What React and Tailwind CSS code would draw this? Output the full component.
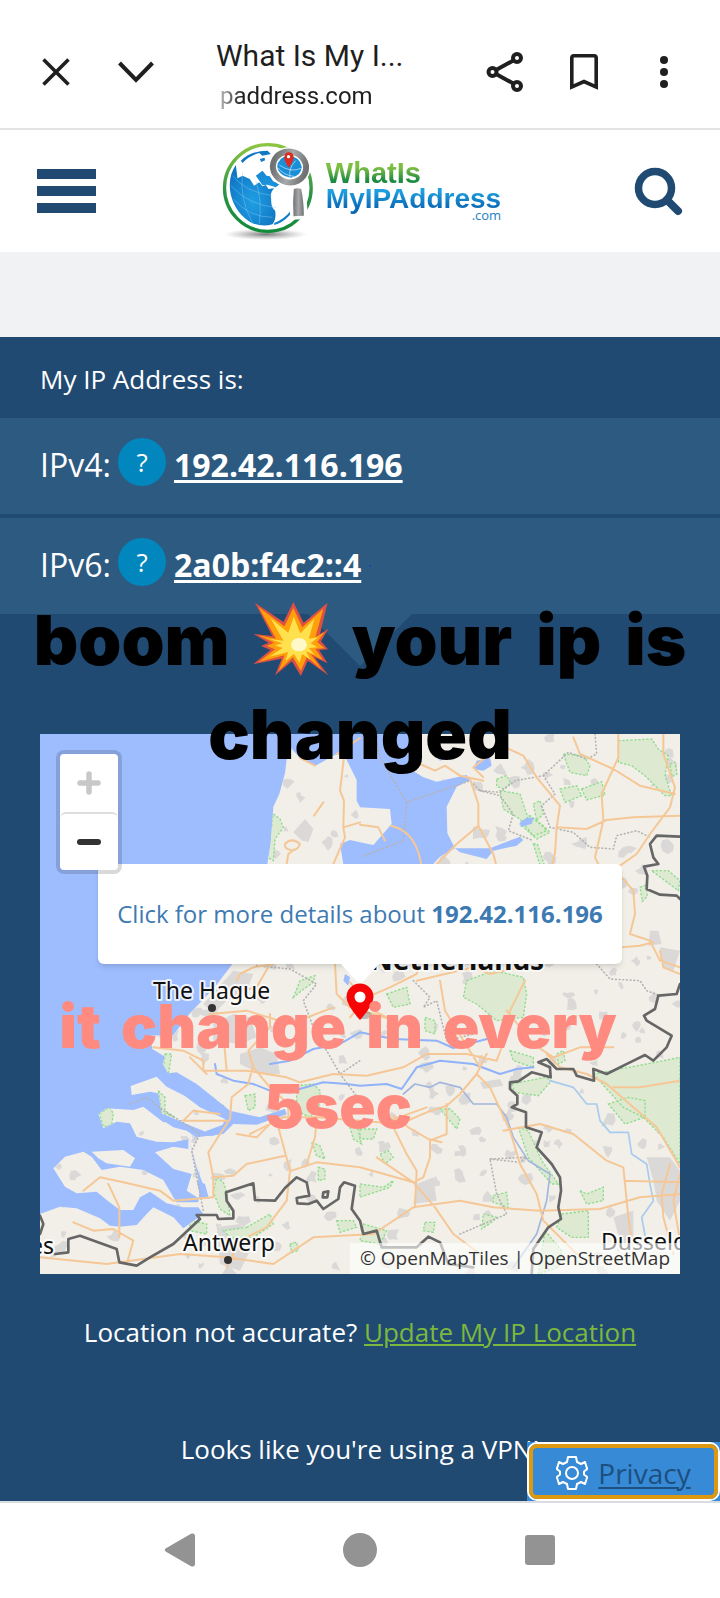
import React from "react";

const ROADS = [
  // north-west
  "M912 70L900 170L912 200L910 280L915 310L880 390M910 280L960 265M850 205L822 245M740 390L745 360L765 345",
  "M735 330q20-22 45 0q-8 22-28 18q-20-4-17-18M780 72L825 95M890 60L960 12",
  // north-east
  "M1125 60L1140 90L1185 110L1215 95L1260 125L1330 140M1400 42L1450 65L1490 130L1560 215L1550 280L1545 355L1535 400",
  "M1290 135L1315 210L1315 275L1360 360L1370 400M1315 275L1250 330L1180 400M1330 130L1300 100L1400 20",
  "M1735 0L1735 70L1685 180L1690 260L1665 370L1680 400M1600 10L1620 60L1720 105L1800 155L1905 180M1870 0L1870 60L1905 160L1890 220L1830 300L1790 360L1740 395",
  "M1550 280L1640 285L1700 258L1780 250L1920 245M1052 275Q1130 290 1145 400M960 272L1015 280L1035 320",
  "M1745 430L1780 470L1785 540L1770 600L1830 620L1860 680L1920 700M1745 640L1800 635L1840 625M1860 650L1870 700L1920 720",
  // centre
  "M590 740L600 720L640 700L700 690M690 690L650 760L600 770M885 690L890 780L930 820L1000 840L1130 880M1140 690L1130 720L1050 760L980 790L930 850",
  "M1130 740L1300 700L1350 720L1480 690M1200 740L1215 830L1320 1000M1455 740L1410 830L1400 900L1370 980M1400 830L1480 930L1540 970L1620 940L1720 940",
  "M930 745L1000 830L1060 860M510 840L620 830L750 870L880 820M690 840L690 880L625 950L640 1000L690 1060L745 1110L745 1180",
  "M340 940L430 950L490 980L490 1010L620 1010L740 1030L780 1045L880 1020L980 1025L1090 1000L1160 960L1280 960L1370 980",
  "M550 900L560 1010M450 970L500 1020M640 990L625 1050L575 1090L570 1155L540 1200L505 1255L520 1330L520 1390L400 1400L360 1370L250 1345L180 1330L130 1370",
  "M430 1160L560 1160M630 1200L730 1150L850 1150M715 1180L750 1310L740 1400L680 1480L600 1520L560 1600M520 1330L580 1325L620 1290L735 1265M590 1200L650 1210L700 1160",
  "M800 1290L825 1210L830 1150L960 1160L1080 1170L1160 1135L1220 1115L1260 1080L1310 1020L1340 960M1160 1120L1050 1160L1100 1260L1130 1310L1125 1420",
  "M755 1310L830 1285L960 1300L1120 1345L1150 1330L1170 1270L1170 1220L1220 1200L1220 1110M1060 1145L1105 1180L1165 1215L1205 1225",
  "M1310 1020L1350 1060L1410 1190L1440 1290L1490 1380L1510 1460L1610 1560M1390 1190L1500 1170L1600 1200L1700 1280L1750 1300L1765 1450L1780 1560M1000 1500L1120 1420L1260 1400L1360 1420L1500 1430L1680 1425L1800 1390L1920 1380",
  "M1010 1270L1120 1345L1185 1420L1240 1500L1320 1560M1520 960L1560 1000L1640 1020L1700 1050L1780 1120L1850 1180L1920 1300M1755 1340L1920 1345M1720 1060L1800 1060L1920 1040",
  "M1890 1290L1865 1380L1870 1450L1900 1560M1920 1320L1900 1400L1920 1520M100 1465L160 1490L220 1485L280 1520L260 1590M0 1570L200 1590L420 1560L560 1570L700 1590L820 1510L1000 1500M205 1350L238 1420L238 1510M430 1160L460 1130L540 1140",
];

const GREENS = [
  "M700 240l20 15l10 25l-25 35l-5 65l-18-10z",
  "M1570 60l60 5l20 30l-10 30l-50-10z",
  "M1735 20l100-5l20 30l30 20l-10 60l20 60l-20 0l-60-60l-40-30l-40-10z",
  "M1380 170l60 10l20 60l40 30l20 20l-40 15l-40-50l-50-30z",
  "M1370 135l30-10l12 22l-20 18l-22-8zM1560 165l50-10l15 30l-50 20zM1625 165l60-22l10 40l-55 15z",
  "M1440 270l30-25l40 30l20 20l-40 20zM1480 210l20-10l10 40l-20 20zM1480 330l12 0l20 60l-10 10z",
  "M1835 410l50 0l35 30l-5 30l-40-30zM1800 460l20-8l2 35l-15 15zM1890 90l15-5l6 35l-15 8z",
  "M1280 740l80-30l90 20l10 50l-10 70l-80 10l-60-50l-40-20zM1040 780l60-20l10 50l-50 10z",
  "M760 790l20-50l45-15l-5 20l-35 25zM375 960l20 0l-10 60l-15-10z",
  "M178 1140l30-20l12 18l-5 35l-25 5zM355 1070l20 20l0 40l30 20l-40-15zM490 1070l20 25l40 20l-10 10l-35-10z",
  "M615 1085l30-5l0 40l-20 10zM770 1055l50-5l20 20l0 40l-30 40l-40-20zM930 1180l20-10l15 60l-25-15z",
  "M815 1225l25 10l15 40l-25-10zM835 1300l20 5l0 30l-20 5zM530 1330l20 15l10 30l10 70l-30-20l-20-50z",
  "M620 1480l70-40l10 30l-60 40l-70 0l-20-20zM890 1460l50 0l10 20l-50 15zM450 1460l50 10l0 30l-50-10z",
  "M1415 1050l100-20l20 10l-40 45l-70-10zM1435 1180l30 10l40 90l50 70l-20 0l-70-80zM1200 1125l30 0l30 30l-10 30z",
  "M1660 1020l160-30l100-20l0 320l-50-80l-60-60l-60-30zM1705 1110l60-20l50 10l0 50l-60 20zM1565 1440l80-10l0 80l-50 0l-45-30z",
  "M1360 1385l40-10l5 45l-45-15zM1020 1260l25-10l15 20l-25 20zM960 1350l70 10l30-20l-10 20l-90 30zM1155 1465l30 0l-5 30l-30-5z",
  "M1330 1440l40 10l-15 15l-30 20zM1620 1370l20 10l50-20l0 40l-50 10zM1410 950l70 20l0 30l-60-20zM1550 960l20-10l5 30l-20 10zM960 1185l50 0l-10 30l-40 0z",
  "M1155 850l30 10l0 40l-30-10zM970 1470l70 20l-20 40l-60-10zM750 1530l20-5l5 25l-20 5zM1515 1490l50 60l-10 50l-60 20z",
];

const BORDERS = [
  "M1920 308L1850 305L1830 330L1840 370L1855 390L1812 398L1822 425L1820 465L1860 482L1910 485L1920 495",
  "M1920 750L1910 780L1855 785L1845 825L1812 845L1820 860L1895 905L1880 940L1840 980L1815 963L1770 985L1700 1020L1660 1005L1662 1040L1610 1025L1600 1005L1550 1005L1520 975L1495 985L1530 1000L1532 1030L1475 1015L1435 1042L1410 1045L1410 1065L1432 1085L1432 1110L1415 1120L1458 1135L1458 1180L1505 1195L1490 1240L1535 1290L1560 1330L1563 1370L1555 1420L1563 1455L1525 1480L1480 1545L1475 1620",
  "M0 1445L10 1470L0 1500M45 1560L85 1555L85 1515L120 1505L230 1545L238 1585L290 1595L330 1570L400 1530L480 1455L470 1443L530 1443L535 1455L580 1453L580 1430L560 1400L558 1375L640 1348L645 1398L705 1400L735 1362L770 1330L800 1345L808 1385L770 1392L772 1408L805 1410L830 1400L850 1425L895 1395L900 1360L912 1345L945 1355L935 1425L960 1460L970 1500L1010 1490L1025 1540L1130 1540L1165 1508L1200 1525L1225 1590L1300 1600",
  "M850 1375L865 1372L862 1390L848 1390Z",
];

const DASHES = [
  "M1665 0L1670 60L1640 75L1585 55L1510 125L1425 140L1380 175L1320 170L1290 140L1100 205L1090 320L960 370M1100 205L1020 70L1010 20",
  "M1510 125L1545 180L1505 215L1530 280L1600 295L1650 340L1720 345L1730 305L1790 290L1830 310M1320 170L1380 185L1420 240L1405 290L1480 320",
  "M650 695L750 705L830 750L790 800L820 880L900 1020L960 980M900 1020L960 1100M270 1110L320 1090L370 1130L420 1160L480 1200L455 1250L490 1430",
  "M1120 740L1170 790L1150 820L1190 800L1220 920L1300 900M1350 1275L1440 1285L1460 1270L1350 1275L1370 1380L1400 1440L1260 1500M1670 690L1710 735L1800 740L1820 770L1860 785",
];

const RIVERS = [
  "M525 990L530 1020L580 1040L640 1050L690 1070L760 1070L850 1045L920 1050L960 1055L1040 1050L1085 1065L1130 1000L1200 980L1300 990L1380 1020L1430 1005L1480 1000",
  "M690 990L750 980L820 945L900 930L960 895L1060 915L1190 920L1240 942L1360 910",
];

function urbanPatches() {
  const out = [];
  let seed = 71;
  const rnd = () => {
    seed = (seed * 16807) % 2147483647;
    return seed / 2147483647;
  };
  for (let i = 0; i < 330; i++) {
    const cx = rnd() * 1920;
    const cy = rnd() * 1620;
    const r = 8 + rnd() * 15;
    const pts = [];
    for (let k = 0; k < 8; k++) {
      const a = (k / 8) * Math.PI * 2;
      const d = r * (0.4 + rnd() * 0.9);
      pts.push(`${Math.round(cx + Math.cos(a) * d)} ${Math.round(cy + Math.sin(a) * d)}`);
    }
    out.push(`M${pts.join("L")}Z`);
  }
  return out.join("");
}

const PATCHES = urbanPatches();

function CityLabel({ x, y, children, bold }) {
  return (
    <text
      x={x}
      y={y}
      fill="#111"
      stroke="#fff"
      strokeOpacity=".8"
      strokeWidth="4"
      strokeLinejoin="round"
      paintOrder="stroke"
      className={bold ? "text-[28px] font-bold" : "text-[23px]"}
    >
      {children}
    </text>
  );
}

function MapCanvas() {
  return (
    <svg
      viewBox="0 0 640 540"
      preserveAspectRatio="xMidYMid slice"
      className="block h-[540px] w-full font-['Noto_Sans',sans-serif]"
      role="img"
      aria-label="Map of the Netherlands"
    >
      <defs>
        <clipPath id="land">
          <path d="M745 33L735 118L718 180L700 218L692 330L682 390L660 500L610 630L575 693L520 765L450 838L400 903L330 905L337 945L375 968L368 990L385 1018L405 1050L475 1100L510 1135L560 1145L660 1150L735 1125L700 1150L620 1170L560 1165L555 1190L520 1205L470 1205L450 1225L470 1300L500 1380L480 1395L440 1370L455 1320L400 1305L345 1255L400 1238L445 1245L445 1215L400 1225L350 1223L290 1208L270 1168L230 1163L190 1183L175 1140L200 1123L280 1128L310 1118L370 1165L430 1160L440 1155L400 1165L365 1138L355 1078L330 1073L275 1083L272 1056L350 1028L380 1058L440 1088L490 1123L560 1142L570 1165L500 1190L450 1225L480 1360L475 1405L410 1405L400 1390L370 1338L310 1308L240 1298L185 1308L155 1268L130 1253L75 1268L40 1303L75 1358L110 1378L170 1373L200 1398L240 1428L280 1428L300 1390L330 1373L380 1408L430 1420L475 1420L490 1440L430 1483L400 1450L340 1420L320 1440L290 1473L240 1478L210 1475L180 1453L110 1423L60 1418L0 1440V1620H1920V0H1120L1130 40L1110 105L1150 130L1190 143L1280 123L1290 138L1250 158L1220 218L1222 298L1245 343L1200 368L1180 390L1120 440L1040 470L960 460L910 390L900 330L930 318L960 325L1000 333L1055 270L1050 225L960 220L950 200L950 138L915 68L890 60L825 96L780 73Z" />
          <path d="M155 1253L250 1248L285 1273L270 1298L200 1288L175 1273Z" />
        </clipPath>
      </defs>
      <rect width="640" height="540" fill="#9ebdff" />
      <g transform="scale(.333333)">
        <g clipPath="url(#land)">
          <rect width="1920" height="1620" fill="#f1efe8" />
          <path d={PATCHES} fill="#dbd9d7" />
          <path
            fill="#dbd9d7"
            d="M760 295l35-40l25 30l-15 40l-25-10zM580 710l60 10l-20 50l-60 30l-40 40l-30-30zM520 870l60-30l50 10l20 60l-50 20l-80-10zM600 960l60-20l50 20l10 60l-60 0l-60-30zM1130 1350l50-20l10 70l-70 10zM1320 1045l60-10l10 20l-60 10zM1820 1270l70 0l30 40l0 90l-30 60l-40-60l-10-60zM1720 1450l60-20l0 80l-40 10zM530 1480l70-10l40 60l-40 80l-60-20zM1830 590l25 0l10 40l-40 5zM1860 640l60 10l-20 60l-30-10z"
          />
          <path d={GREENS.join("")} fill="#dde9d0" stroke="#8fdc8f" strokeWidth="4" strokeDasharray="7 5" />
        </g>
        <path
          fill="#9ebdff"
          d="M385 1018L410 1015L470 1050L520 1090L570 1130L660 1150L735 1125L740 1140L650 1172L580 1170L550 1200L470 1210L440 1190L400 1180L370 1160L370 1140L440 1170L500 1195L545 1180L555 1155L480 1120L400 1060Z
             M1245 343L1350 343L1440 308L1450 318L1430 335L1360 350L1340 375L1260 355Z M1310 80L1350 72L1355 95L1330 110L1300 105Z M1440 265l20-14l20 0l-4 18l-34 10zM1180 60l30-10l20 20l-30 10z M915 720l15 10l-5 25l-15-15z M470 1340l25 10l12 45l-25-5z"
        />
        <g fill="none" strokeLinecap="round" strokeLinejoin="round">
          <path d={RIVERS.join("")} stroke="#8fb2fa" strokeWidth="6" />
          <path d="M1090 1080L1125 1050L1170 1060L1200 1045L1260 1060L1300 1110L1370 1110L1400 1150L1420 1210L1465 1280L1530 1320L1520 1400L1490 1500L1420 1600" stroke="#a3b7dd" strokeWidth="5" />
          <path d="M1530 1040L1600 1060L1640 1110L1670 1110L1680 1160L1710 1195L1765 1195L1775 1260L1820 1290L1830 1350L1840 1400L1805 1450L1820 1530" stroke="#a8cbee" strokeWidth="5" />
          <path d={DASHES.join("")} stroke="#b3b3b3" strokeWidth="5" strokeDasharray="2 9" />
          <path d={ROADS.join("")} stroke="#f6c796" strokeWidth="6" />
          <path d={BORDERS.join("")} stroke="#666" strokeWidth="8" />
        </g>
      </g>
      <CityLabel x="330" y="236" bold>Netherlands</CityLabel>
      <CityLabel x="113" y="265">The Hague</CityLabel>
      <CityLabel x="143" y="517">Antwerp</CityLabel>
      <CityLabel x="-10" y="520">es</CityLabel>
      <CityLabel x="561" y="516">Dusseldorf</CityLabel>
      <circle cx="172" cy="274" r="4" fill="#333" />
      <circle cx="188" cy="526" r="4" fill="#333" />
    </svg>
  );
}

function GlobeLogo() {
  return (
    <svg viewBox="20 10 290 306" className="h-[102px] w-[97px]" aria-hidden="true">
      <defs>
        <linearGradient id="ring" x1="0" y1="0" x2="0" y2="1">
          <stop offset="0" stopColor="#8cc63f" />
          <stop offset=".55" stopColor="#2c9347" />
          <stop offset="1" stopColor="#118a3a" />
        </linearGradient>
        <radialGradient id="sea" cx=".5" cy=".6" r=".6">
          <stop offset="0" stopColor="#1f9fe4" />
          <stop offset="1" stopColor="#1076c4" />
        </radialGradient>
        <radialGradient id="shade">
          <stop offset="0" stopColor="#555" stopOpacity=".8" />
          <stop offset="1" stopColor="#999" stopOpacity="0" />
        </radialGradient>
        <linearGradient id="metal" x1="0" x2="1">
          <stop offset="0" stopColor="#6f7173" />
          <stop offset=".5" stopColor="#a7a9ab" />
          <stop offset="1" stopColor="#6f7173" />
        </linearGradient>
      </defs>
      <ellipse cx="160" cy="296" rx="125" ry="17" fill="url(#shade)" />
      <circle cx="166" cy="157" r="130" fill="#fff" stroke="url(#ring)" strokeWidth="10" />
      <path fill="url(#sea)" d="M70 88Q44 125 55 178Q70 235 118 262Q150 275 180 266Q192 250 188 225Q175 215 176 190Q172 170 185 158L168 160L160 148L150 152L140 140L125 150L112 130L90 120L75 128Z" />
      <path fill="url(#sea)" d="M185 262Q215 250 235 225L232 238Q210 262 185 268ZM85 75Q115 45 165 45L175 55L150 60L140 52Q110 60 90 82ZM130 120l20-15l12 15l10 2l10 15l20 8l-12 10l-25-8l-15 2zM142 70l14-4l2 8l-12 5z" />
      <g fill="none" stroke="#8fd0f4" strokeWidth="1.5" opacity=".8">
        <path d="M55 150Q110 210 190 215M62 190Q110 245 180 245M90 110Q80 190 120 262M130 135Q150 200 140 265M60 120Q100 170 180 180" />
      </g>
      <path d="M237 150L275 154Q285 200 287 250L232 252Q232 200 237 150Z" fill="#fff" />
      <path d="M244 160Q256 155 266 160Q274 195 274 240L243 242Q240 200 244 160Z" fill="url(#metal)" />
      <ellipse cx="231" cy="94" rx="64" ry="60" fill="#fff" />
      <ellipse cx="231" cy="94" rx="50" ry="46" fill="#fff" stroke="url(#metal)" strokeWidth="18" transform="rotate(15 231 94)" />
      <path d="M194 94Q195 65 228 60Q262 62 268 94Q265 122 235 126Q200 122 194 94Z" fill="#1a8fd8" />
      <path d="M200 88Q235 112 266 98M195 95Q215 120 245 122M250 75Q228 95 232 125" fill="none" stroke="#fff" strokeWidth="2" opacity=".8" />
      <path d="M229 96Q212 72 216 60Q220 50 229 50Q239 50 243 60Q246 72 229 96Z" fill="#dc2b20" />
      <circle cx="228" cy="63" r="5" fill="#fff" />
    </svg>
  );
}

function Burst() {
  return (
    <svg viewBox="555 72 158 222" preserveAspectRatio="none" className="mt-[9px] h-[74px] w-[74px]" role="img" aria-label="collision">
      <path fill="#dd5144" d="M557 74L618 132L639 72L661 134L712 74L696 168L714 152L698 190L713 214L694 216L712 256L684 238L714 292L670 248L655 294L636 250L600 292L614 242L554 258L590 216L570 204L586 194L554 168L594 174Z" />
      <path fill="#ff9f0a" d="M565 88L620 145L639 90L658 148L703 92L686 178L706 162L690 192L706 211L686 212L702 246L676 228L700 276L668 236L655 278L638 238L608 278L620 232L565 252L600 214L582 204L598 194L564 172L602 182Z" />
      <path fill="#ffe14d" d="M590 120L628 164L640 116L654 166L684 122L672 182L692 178L676 196L690 208L672 210L684 230L666 220L676 246L658 228L652 254L640 228L622 250L628 222L588 236L616 210L600 202L616 196L586 182L618 188Z" />
      <ellipse cx="651" cy="200" rx="17" ry="20" fill="#fff9c9" />
    </svg>
  );
}

function IpRow({ label, ip, trailing }) {
  return (
    <div className="flex h-24 items-center gap-2 bg-[#2d5a80] px-10 pb-2">
      <span className="w-[70px] pt-1.5 text-[32px] leading-[44px] whitespace-nowrap">{label}</span>
      <button type="button" aria-label={`About ${label}`} className="size-12 shrink-0 rounded-full bg-[#0286be] text-[26px] leading-none">
        ?
      </button>
      <a href="#details" className="pt-1.5 text-[32px] leading-[44px] font-bold underline decoration-[3px] underline-offset-3">
        {ip}
      </a>
      {trailing && <span className="mt-2 size-0.5 bg-[#1c4aa8]" />}
    </div>
  );
}

export default function App() {
  return (
    <div className="relative min-h-screen w-full bg-white font-['Open_Sans',sans-serif] text-white">
      <header className="flex h-[130px] items-center border-b-2 border-[#e2e3e4] pt-4 pr-[52px] pl-[42px] font-[Roboto,sans-serif] text-[#1f1f1f]">
        <button type="button" aria-label="Close">
          <svg viewBox="0 0 28 28" className="size-7" fill="none" stroke="currentColor" strokeWidth="3.600">
            <path d="M1.5 1.5L26.500 26.500M26.500 1.500L1.500 26.500" />
          </svg>
        </button>
        <button type="button" aria-label="Minimise" className="ml-12">
          <svg viewBox="0 0 36 22" className="h-[22px] w-9" fill="none" stroke="currentColor" strokeWidth="4">
            <path d="M1.500 2L18 19L34.500 2" />
          </svg>
        </button>
        <div className="ml-[62px] min-w-0 flex-1 pt-2">
          <div className="truncate text-[30px] leading-10">What Is My I...</div>
          <div className="bg-linear-to-r from-[#d5d5d5] from-0% via-[#1f1f1f] via-10% to-[#1f1f1f] bg-clip-text pl-1 text-[24px] leading-10 text-transparent">paddress.com</div>
        </div>
        <div className="flex items-center">
          <button type="button" aria-label="Share">
            <svg viewBox="0 0 38 40" className="h-10 w-[38px]" fill="none" stroke="currentColor" strokeWidth="4">
              <circle cx="31" cy="6" r="4" />
              <circle cx="6.500" cy="20" r="4" />
              <circle cx="31" cy="34" r="4" />
              <path d="M27.300 8.500L10 18M10 22L27.300 31.500" />
            </svg>
          </button>
          <button type="button" aria-label="Bookmark" className="ml-[46px]">
            <svg viewBox="0 0 28 36" className="h-9 w-7" fill="none" stroke="currentColor" strokeWidth="3.600">
              <path d="M1.800 33V4Q1.800 1.800 4 1.800H24Q26.200 1.800 26.200 4V33L14 27.500Z" />
            </svg>
          </button>
          <button type="button" aria-label="More" className="ml-[62px]">
            <svg viewBox="0 0 8 34" className="h-[34px] w-2" fill="currentColor">
              <circle cx="4" cy="5" r="4" />
              <circle cx="4" cy="17" r="4" />
              <circle cx="4" cy="29" r="4" />
            </svg>
          </button>
        </div>
      </header>

      <div className="grid h-[122px] grid-cols-[1fr_auto_1fr] items-center px-[37px]">
        <button type="button" aria-label="Menu" className="flex w-[59px] flex-col gap-[7px]">
          <span className="h-2.5 bg-[#204a72]" />
          <span className="h-2.5 bg-[#204a72]" />
          <span className="h-2.5 bg-[#204a72]" />
        </button>
        <a href="#home" className="flex items-center gap-2.5 pb-0.5 font-['Liberation_Sans',sans-serif]">
          <GlobeLogo />
          <span className="flex flex-col font-bold">
            <span className="bg-linear-to-b from-[#7cbf42] from-30% to-[#1c8c42] to-75% bg-clip-text text-[29px] leading-7 text-transparent">WhatIs</span>
            <span className="-mt-1 bg-linear-to-b from-[#1fa0e0] from-25% to-[#0a68b4] to-80% bg-clip-text text-[28px] leading-8 text-transparent">MyIPAddress</span>
            <span className="-mt-1.5 self-end font-['Open_Sans',sans-serif] text-[13px] leading-3 font-normal text-[#1a7fc1]">.com</span>
          </span>
        </a>
        <button type="button" aria-label="Search" className="justify-self-end">
          <svg viewBox="0 0 49 49" className="size-[49px]" fill="none" stroke="#204a72">
            <circle cx="21" cy="21" r="16.500" strokeWidth="7.500" />
            <path d="M33 33L44 44" strokeWidth="8" strokeLinecap="round" />
          </svg>
        </button>
      </div>

      <div className="h-[85px] bg-[#f0f2f4]" />

      <main className="relative bg-[#204a72] pb-[34px]">
        <h1 className="flex h-[81px] items-center px-10 pt-1 text-[26px]">My IP Address is:</h1>
        <div className="flex flex-col gap-1">
          <IpRow label="IPv4:" ip="192.42.116.196" />
          <IpRow label="IPv6:" ip="2a0b:f4c2::4" trailing />
        </div>
        <svg viewBox="0 0 104 52" className="mx-auto h-[52px] w-[104px] fill-[#2d5a80]" aria-hidden="true">
          <path d="M0 0H104L52 52Z" />
        </svg>

        <div className="relative mx-10 mt-[68px] overflow-hidden">
          <MapCanvas />
          <div className="absolute top-[130px] left-1/2 flex h-[100px] w-[524px] -translate-x-1/2 items-center justify-center rounded-md bg-white text-[24px] whitespace-nowrap text-[#3d7ab2] shadow-md">
            <a href="#details">
              Click for more details about <b>192.42.116.196</b>
            </a>
          </div>
          <svg viewBox="0 0 44 60" className="absolute top-[229px] left-1/2 h-[60px] w-11 -translate-x-1/2" aria-hidden="true">
            <path d="M2 0H42L22 22Z" fill="#fff" />
            <ellipse cx="26" cy="52" rx="8" ry="4" fill="#555" opacity=".35" />
            <path d="M22 57Q8.500 42 8.500 34A13.500 13.500 0 0 1 35.500 34Q35.500 42 22 57Z" fill="#f50505" />
            <circle cx="22" cy="34" r="5.500" fill="#fff" />
          </svg>
          <div className="absolute top-4 left-4 flex flex-col rounded-lg border-4 border-black/15 bg-white bg-clip-padding">
            <button type="button" aria-label="Zoom in" className="flex h-[58px] w-[58px] items-center justify-center rounded-md bg-white">
              <svg viewBox="0 0 24 24" className="size-6" stroke="#c8c8c8" strokeWidth="5.500" strokeLinecap="round">
                <path d="M12 3V21M3 12H21" />
              </svg>
            </button>
            <button type="button" aria-label="Zoom out" className="flex h-[58px] w-[58px] items-center justify-center rounded-md border-t-2 border-[#ddd] bg-white">
              <svg viewBox="0 0 24 24" className="size-6" stroke="#333" strokeWidth="6" strokeLinecap="round">
                <path d="M3 12H21" />
              </svg>
            </button>
          </div>
          <div className="absolute right-0 bottom-0 bg-white/60 px-2.5 text-[19px] leading-[31px] whitespace-nowrap text-[#333]">
            © <a href="#tiles">OpenMapTiles</a> | <a href="#osm">OpenStreetMap</a>
          </div>
        </div>

        <p className="mt-10 text-center text-[26px] leading-9">
          Location not accurate?{" "}
          <a href="#update" className="text-[#7cb83e] underline">
            Update My IP Location
          </a>
        </p>
        <p className="mt-[81px] text-center text-[26px] leading-9">Looks like you're using a VPN!</p>

        <div className="absolute right-0 bottom-0 h-[59px] w-[193px] bg-[#378ad6]">
          <button type="button" className="flex h-full w-full items-center justify-center gap-2.5 rounded-[10px] border-2 border-white bg-[#378ad6] pt-0.5 text-[28px] text-[#1d4f7f] outline-4 -outline-offset-6 outline-[#dc9810]">
            <svg viewBox="0 0 32 34" className="h-[34px] w-8" fill="none" stroke="#fff" strokeWidth="2" strokeLinejoin="round">
              <path d="M12 1H20L21 6L25 8L29 6L31.200 13L28 15.500V18.500L31.200 21L29 28L25 26L21 28L20 33H12L11 28L7 26L3 28L.8 21L4 18.500V15.500L.8 13L3 6L7 8L11 6Z" />
              <circle cx="16" cy="17" r="6" />
            </svg>
            <span className="underline decoration-2 underline-offset-3">Privacy</span>
          </button>
        </div>
      </main>

      <nav className="grid h-24 grid-cols-3 items-center justify-items-center border-t-2 border-[#d9dde1] bg-white px-[90px]">
        <button type="button" aria-label="Back">
          <svg viewBox="0 0 34 34" className="size-[34px]" fill="#939393">
            <path d="M3 15.300L28 .8Q32 -.5 32 3.500V30.500Q32 34.500 28 33.200L3 18.700Q.5 17 3 15.300Z" />
          </svg>
        </button>
        <button type="button" aria-label="Home" className="size-[34px] rounded-full bg-[#939393]" />
        <button type="button" aria-label="Recent apps" className="size-[30px] rounded-[3px] bg-[#939393]" />
      </nav>

      <div className="pointer-events-none absolute inset-x-0 top-[593px] font-[Inter,sans-serif] text-[69px] leading-[94px] font-black text-black">
        <div className="flex items-start justify-center gap-6 whitespace-nowrap">
          <span>boom</span>
          <Burst />
          <span>your</span>
          <span>ip</span>
          <span>is</span>
        </div>
        <div className="text-center">changed</div>
      </div>
      <div className="pointer-events-none absolute inset-x-0 top-[986px] pr-11 font-[Inter,sans-serif] text-[60px] leading-20 font-black text-[#ff8a80]">
        <div className="flex justify-center gap-5 whitespace-nowrap">
          <span>it</span>
          <span>change</span>
          <span>in</span>
          <span>every</span>
        </div>
        <div className="text-center">5sec</div>
      </div>
    </div>
  );
}
